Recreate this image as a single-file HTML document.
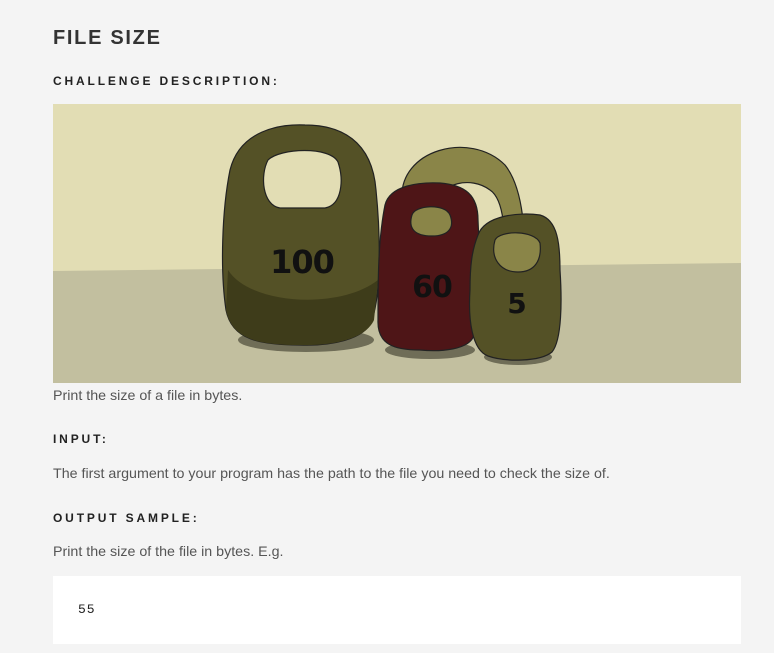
<!DOCTYPE html>
<html><head><meta charset="utf-8"><style>
html,body{margin:0;padding:0;background:#f4f4f4;width:774px;height:653px;overflow:hidden;font-family:"Liberation Sans",Arial,sans-serif}
.a{position:absolute;left:53px;white-space:nowrap}
h1{margin:0;font-size:20px;font-weight:bold;letter-spacing:1.7px;color:#333}
h3{margin:0;font-size:12px;font-weight:bold;letter-spacing:2.85px;color:#222}
p{margin:0;font-size:14.25px;color:#555}
</style></head><body>
<div class="a" style="top:27px"><h1>FILE SIZE</h1></div>
<div class="a" style="top:74px"><h3>CHALLENGE DESCRIPTION:</h3></div>
<svg class="a" style="top:104px" width="688" height="279" viewBox="53 104 688 279">
<rect x="53" y="104" width="688" height="279" fill="#e2ddb4"/>
<polygon points="53,271 741,263 741,383 53,383" fill="#c2bf9f"/>
<ellipse cx="306" cy="340" rx="68" ry="12" fill="#6f6d57"/>
<ellipse cx="430" cy="350" rx="45" ry="9" fill="#6f6d57"/>
<ellipse cx="518" cy="357" rx="34" ry="8" fill="#6f6d57"/>
<path d="M402,200 C398,150 470,130 505,165 C525,190 525,240 525,270 L505,270 C505,235 505,200 490,190 C470,175 440,185 440,200 Z" fill="#8a8548" stroke="#222" stroke-width="1.2"/>
<path d="M230,170 C240,130 280,124 305,125 C340,125 372,140 376,190 C380,230 382,290 372,320 C365,340 330,346 300,345 C260,345 232,340 226,310 C220,270 222,210 230,170 Z" fill="#545126" stroke="#222" stroke-width="1.2"/>
<path d="M228,270 C250,305 340,310 378,280 L374,320 C365,340 330,346 300,345 C260,345 232,340 226,310 Z" fill="#3e3c1a"/>
<path d="M268,160 C280,148 330,146 338,162 C344,180 342,205 325,208 L280,208 C262,205 260,175 268,160 Z" fill="#e2ddb4" stroke="#222" stroke-width="1.2"/>
<text x="302" y="273" font-family="DejaVu Sans,sans-serif" font-weight="bold" font-size="32" text-anchor="middle" fill="#111" letter-spacing="-1">100</text>
<path d="M385,205 C390,185 420,182 440,183 C465,185 478,195 478,220 C480,260 480,300 474,335 C470,350 440,352 420,350 C395,350 377,345 378,320 C378,280 378,240 385,205 Z" fill="#4e1517" stroke="#222" stroke-width="1.2"/>
<path d="M412,215 C415,205 445,203 450,215 C455,228 448,236 432,236 C414,236 408,228 412,215 Z" fill="#8a8548" stroke="#222" stroke-width="1.2"/>
<text x="432" y="297" font-family="DejaVu Sans,sans-serif" font-weight="bold" font-size="30" text-anchor="middle" fill="#111" letter-spacing="-1">60</text>
<path d="M478,235 C485,215 520,212 540,215 C558,220 560,245 560,270 C562,300 562,340 552,352 C540,362 505,362 488,356 C472,350 468,320 470,290 C470,265 472,250 478,235 Z" fill="#545126" stroke="#222" stroke-width="1.2"/>
<path d="M495,240 C500,230 535,230 540,243 C542,260 535,272 518,272 C500,272 490,258 495,240 Z" fill="#8a8548" stroke="#222" stroke-width="1.2"/>
<text x="517" y="313" font-family="DejaVu Sans,sans-serif" font-weight="bold" font-size="28" text-anchor="middle" fill="#111">5</text>
</svg>
<div class="a" style="top:388px"><p>Print the size of a file in bytes.</p></div>
<div class="a" style="top:432px"><h3>INPUT:</h3></div>
<div class="a" style="top:466px"><p>The first argument to your program has the path to the file you need to check the size of.</p></div>
<div class="a" style="top:511px"><h3>OUTPUT SAMPLE:</h3></div>
<div class="a" style="top:544px"><p>Print the size of the file in bytes. E.g.</p></div>
<div style="position:absolute;left:53px;top:576px;width:688px;height:68px;background:#fff"></div>
<div class="a" style="top:602px;left:78px;font-family:'Liberation Mono',monospace;font-size:13px;letter-spacing:1px;color:#222">55</div>
</body></html>
